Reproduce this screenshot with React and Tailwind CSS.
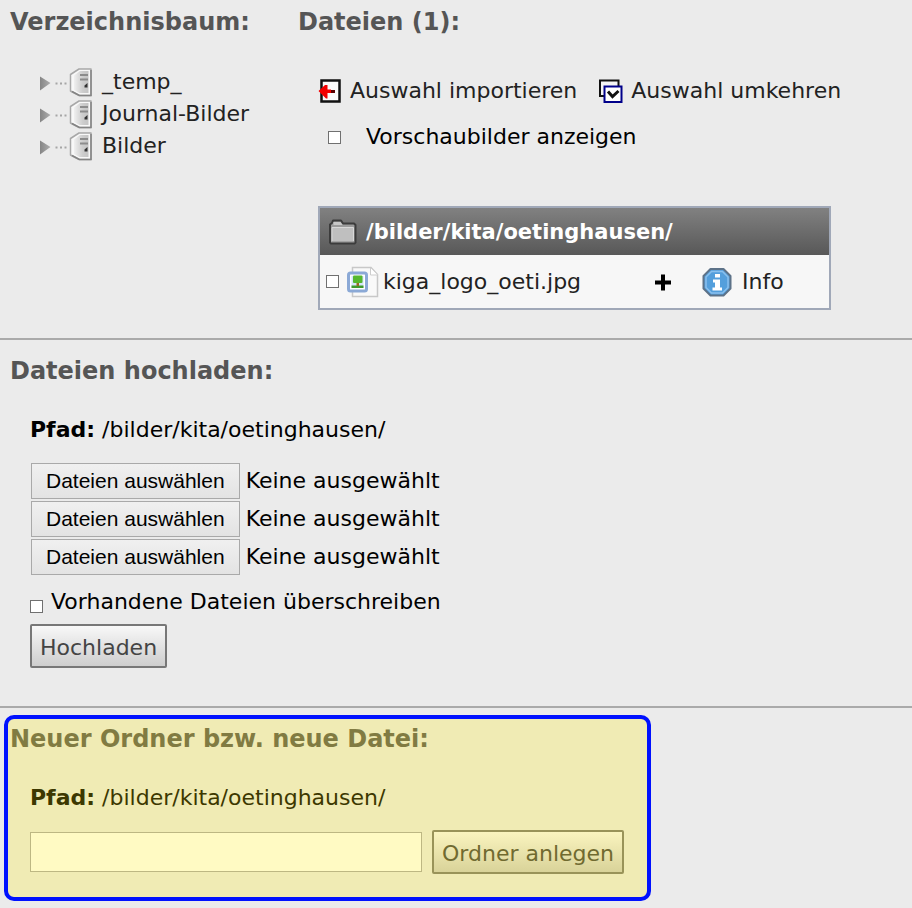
import { useRef, useState } from "react";

const folders = ["_temp_", "Journal-Bilder", "Bilder"];
const path = "/bilder/kita/oetinghausen/";
const buttonBase = "h-11 rounded-[2px] border-2 px-2 pt-1 text-[22px] whitespace-nowrap";

function DriveIcon() {
  return (
    <svg width="54" height="30" viewBox="0 0 54 30" className="shrink-0" aria-hidden="true">
      <defs>
        <linearGradient id="drive" x1="0" x2="1">
          <stop offset="0" stopColor="#f0f0f0" />
          <stop offset="0.6" stopColor="#cdcdcd" />
          <stop offset="1" stopColor="#c4c4c4" />
        </linearGradient>
        <linearGradient id="arrow" x1="0" x2="1">
          <stop offset="0" stopColor="#858585" />
          <stop offset="1" stopColor="#adadad" />
        </linearGradient>
      </defs>
      <path d="M2 9.500 L12.500 16 L2 23.500 Z" fill="url(#arrow)" />
      <path d="M17.500 15.500h2v2h-2z M22 15.500h2v2h-2z M26.500 15.500h2v2h-2z" fill="#a6a6a6" />
      <path d="M41 2 H53 V28.500 H41 L32.500 24 V7.500 Z" fill="#f8f8f8" stroke="#a8a8a8" strokeWidth="1.500" strokeLinejoin="round" />
      <path d="M42 4 H50.500 V26 H41.500 L36 23 V8.500 Z" fill="url(#drive)" />
      <path d="M53 3 V28.500 H41.500 L34 24.500" fill="none" stroke="#848484" strokeWidth="1.500" />
      <path d="M42 8h8 M42 12.500h8" stroke="#8c8c8c" strokeWidth="2" />
      <path d="M46.500 18.500l3-2.500v4.500h-3z" fill="#333" />
    </svg>
  );
}

function ImportIcon() {
  return (
    <svg width="24" height="24" viewBox="0 0 24 24" className="shrink-0" aria-hidden="true">
      <path d="M3.500 1.500h18v21h-18z" fill="#fafafa" stroke="#111" strokeWidth="2.500" />
      <path d="M9 12.500h8" stroke="#5a0000" strokeWidth="3" />
      <path d="M0.500 12 L7 6 H9.500 V10.500 H13 V14 H9.500 V19.500 H8 Z" fill="#f30000" />
    </svg>
  );
}

function InvertIcon() {
  return (
    <svg width="24" height="24" viewBox="0 0 24 24" className="shrink-0" aria-hidden="true">
      <path d="M1 1.500h18.500v15.500h-18.500z" fill="#f4f4f4" stroke="#111" strokeWidth="2" />
      <path d="M5.500 7.500h17v15.500h-17z" fill="#fff" stroke="#00008a" strokeWidth="2" />
      <path d="M9 12.500l4.500 5 6-5.500" fill="none" stroke="#111" strokeWidth="3" />
    </svg>
  );
}

function FolderIcon() {
  return (
    <svg width="30" height="28" viewBox="0 0 30 28" aria-hidden="true">
      <path d="M2 24.500V6.500l2-1.500 1-2.500h8l2 3h11l1.500 1.500v17.500l-1 1h-23.500z" fill="#9b9b9b" stroke="#3c3c3c" strokeWidth="2" strokeLinejoin="round" />
      <path d="M5.500 4h7l2 3h-9z" fill="#c8c8c8" />
      <path d="M4 9.500h21.500v14h-21.500z" fill="#bfbfbf" stroke="#d8d8d8" />
      <path d="M4 24h22" stroke="#6e6e6e" />
    </svg>
  );
}

function ImageFileIcon() {
  return (
    <svg width="32" height="32" viewBox="0 0 32 32" className="shrink-0" aria-hidden="true">
      <path d="M5.500 1.500h18.500l6.500 7v22h-25z" fill="#f9f9f9" stroke="#c8c8c8" strokeWidth="1.500" />
      <path d="M23.500 2v7h7" fill="#fff" stroke="#cdcdcd" />
      <rect x="1.500" y="7" width="18" height="18" rx="2" fill="#fff" stroke="#8ba9d6" strokeWidth="3" />
      <path d="M4.500 10h12v12h-12z" fill="#d3e5f8" />
      <path d="M4.500 19.500h12v2.500h-12z" fill="#3f9a2c" />
      <path d="M9.500 16h2.500v4h-2.500z" fill="#9a6a20" />
      <rect x="6" y="9.500" width="9.500" height="7.500" rx="1" fill="#56b82e" />
    </svg>
  );
}

function PlusIcon() {
  return (
    <svg width="18" height="18" viewBox="0 0 18 18" aria-hidden="true">
      <path d="M9 1.500v16M1 9.500h16" stroke="#000" strokeWidth="4" />
    </svg>
  );
}

function InfoIcon() {
  return (
    <svg width="30" height="30" viewBox="0 0 30 30" className="shrink-0" aria-hidden="true">
      <path d="M8.500 2h13l7 7v12.500l-7 7h-13l-7-7V9z" fill="#549fdc" stroke="#5d7288" strokeWidth="2" strokeLinejoin="round" />
      <path d="M9.500 4.500h11l5.500 5.500v10.500l-5.500 5.500h-11L4 20.500V10z" fill="none" stroke="#8ac0ed" strokeWidth="1.500" />
      <path d="M13 7h5v3.500h-5z M11 12.500h7v8h2v3h-9.500v-3h2.500v-5h-2z" fill="#fff" />
    </svg>
  );
}

function Checkbox({ id }) {
  return (
    <input
      id={id}
      type="checkbox"
      className="size-[13px] shrink-0 appearance-none border border-[#707070] bg-white checked:bg-[#707070]"
    />
  );
}

function Heading({ children, className = "text-[#555]" }) {
  return <h2 className={`text-[24px] leading-8 font-bold ${className}`}>{children}</h2>;
}

function FilePicker({ id }) {
  const input = useRef(null);
  const [name, setName] = useState("Keine ausgewählt");

  return (
    <div className="flex items-center gap-[6px]">
      <button
        type="button"
        onClick={() => input.current.click()}
        className="h-9 border border-[#a9a9a9] bg-linear-to-b from-[#f0f0f0] to-[#e3e3e3] px-[14px] font-['Liberation_Sans',sans-serif] text-[21px]"
      >
        Dateien auswählen
      </button>
      <input
        ref={input}
        id={id}
        type="file"
        className="hidden"
        onChange={(e) => setName(e.target.files[0]?.name ?? "Keine ausgewählt")}
      />
      <label htmlFor={id}>{name}</label>
    </div>
  );
}

export default function App() {
  return (
    <main className="min-h-screen bg-[#ebebeb] font-['DejaVu_Sans',sans-serif] text-[22px] leading-8 text-black">
      <div className="flex gap-11 border-b-2 border-[#aaa] px-[10px] pt-[6px] pb-7">
        <nav className="w-[244px] shrink-0">
          <Heading>Verzeichnisbaum:</Heading>
          <ul className="mt-7 pl-7 text-[#222]">
            {folders.map((folder) => (
              <li key={folder}>
                <a href="#" className="flex items-center gap-[10px] whitespace-nowrap">
                  <DriveIcon />
                  {folder}
                </a>
              </li>
            ))}
          </ul>
        </nav>

        <section>
          <Heading>Dateien (1):</Heading>
          <div className="pl-5">
            <div className="mt-[37px] flex gap-[22px] text-[#222]">
              <a href="#" className="flex items-center gap-2 whitespace-nowrap">
                <ImportIcon />
                Auswahl importieren
              </a>
              <a href="#" className="flex items-center gap-2 whitespace-nowrap">
                <InvertIcon />
                Auswahl umkehren
              </a>
            </div>
            <div className="mt-[14px] flex items-center gap-[25px] pl-[10px]">
              <Checkbox id="preview" />
              <label htmlFor="preview">Vorschaubilder anzeigen</label>
            </div>

            <table className="mt-[53px] w-[513px] border-2 border-[#a0a8b8] bg-[#f7f7f7] text-left">
              <thead>
                <tr className="h-12 bg-linear-to-b from-[#828282] to-[#585858] text-white">
                  <th colSpan={3} className="p-0 text-[21px]">
                    <span className="flex items-center gap-2 pl-2">
                      <FolderIcon />
                      {path}
                    </span>
                  </th>
                </tr>
              </thead>
              <tbody>
                <tr className="h-[54px] text-[#222]">
                  <td className="p-0">
                    <span className="flex items-center pl-[6px]">
                      <Checkbox id="file" />
                      <label htmlFor="file" className="flex items-center gap-1 pl-2">
                        <ImageFileIcon />
                        kiga_logo_oeti.jpg
                      </label>
                    </span>
                  </td>
                  <td className="w-12 p-0">
                    <button type="button" aria-label="Hinzufügen" className="block">
                      <PlusIcon />
                    </button>
                  </td>
                  <td className="w-[128px] p-0">
                    <a href="#" className="flex items-center gap-[10px]">
                      <InfoIcon />
                      Info
                    </a>
                  </td>
                </tr>
              </tbody>
            </table>
          </div>
        </section>
      </div>

      <section className="border-b-2 border-[#aaa] px-[10px] pt-[15px] pb-[38px]">
        <Heading>Dateien hochladen:</Heading>
        <form className="pl-5">
          <p className="mt-[27px]">
            <b>Pfad:</b> {path}
          </p>
          <div className="mt-[17px] flex flex-col gap-[2px] pl-px">
            <FilePicker id="upload-1" />
            <FilePicker id="upload-2" />
            <FilePicker id="upload-3" />
          </div>
          <div className="mt-[11px] flex items-center gap-2">
            <span className="flex pt-2">
              <Checkbox id="overwrite" />
            </span>
            <label htmlFor="overwrite">Vorhandene Dateien überschreiben</label>
          </div>
          <button
            type="button"
            className={`${buttonBase} mt-[6px] block border-[#777] bg-linear-to-b from-[#f8f8f8] to-[#cecece] text-[#444]`}
          >
            Hochladen
          </button>
        </form>
      </section>

      <div className="px-1 py-[7px]">
        <section className="w-[647px] max-w-full rounded-[10px] border-4 border-[#0011ff] bg-[#f0ebb4] px-[2px] pt-1 pb-[23px]">
          <Heading className="text-[#817b42]">Neuer Ordner bzw. neue Datei:</Heading>
          <form className="pl-5 text-[#3d3800]">
            <p className="mt-[27px]">
              <b>Pfad:</b> {path}
            </p>
            <div className="mt-4 flex items-center gap-[10px]">
              <input
                type="text"
                aria-label="Neuer Ordner"
                className="h-10 w-[392px] min-w-0 border border-[#bdb783] bg-[#fffac3] px-2"
              />
              <button
                type="button"
                className={`${buttonBase} border-[#999359] bg-linear-to-b from-[#faf4bf] to-[#d9d399] text-[#706a30]`}
              >
                Ordner anlegen
              </button>
            </div>
          </form>
        </section>
      </div>
    </main>
  );
}
